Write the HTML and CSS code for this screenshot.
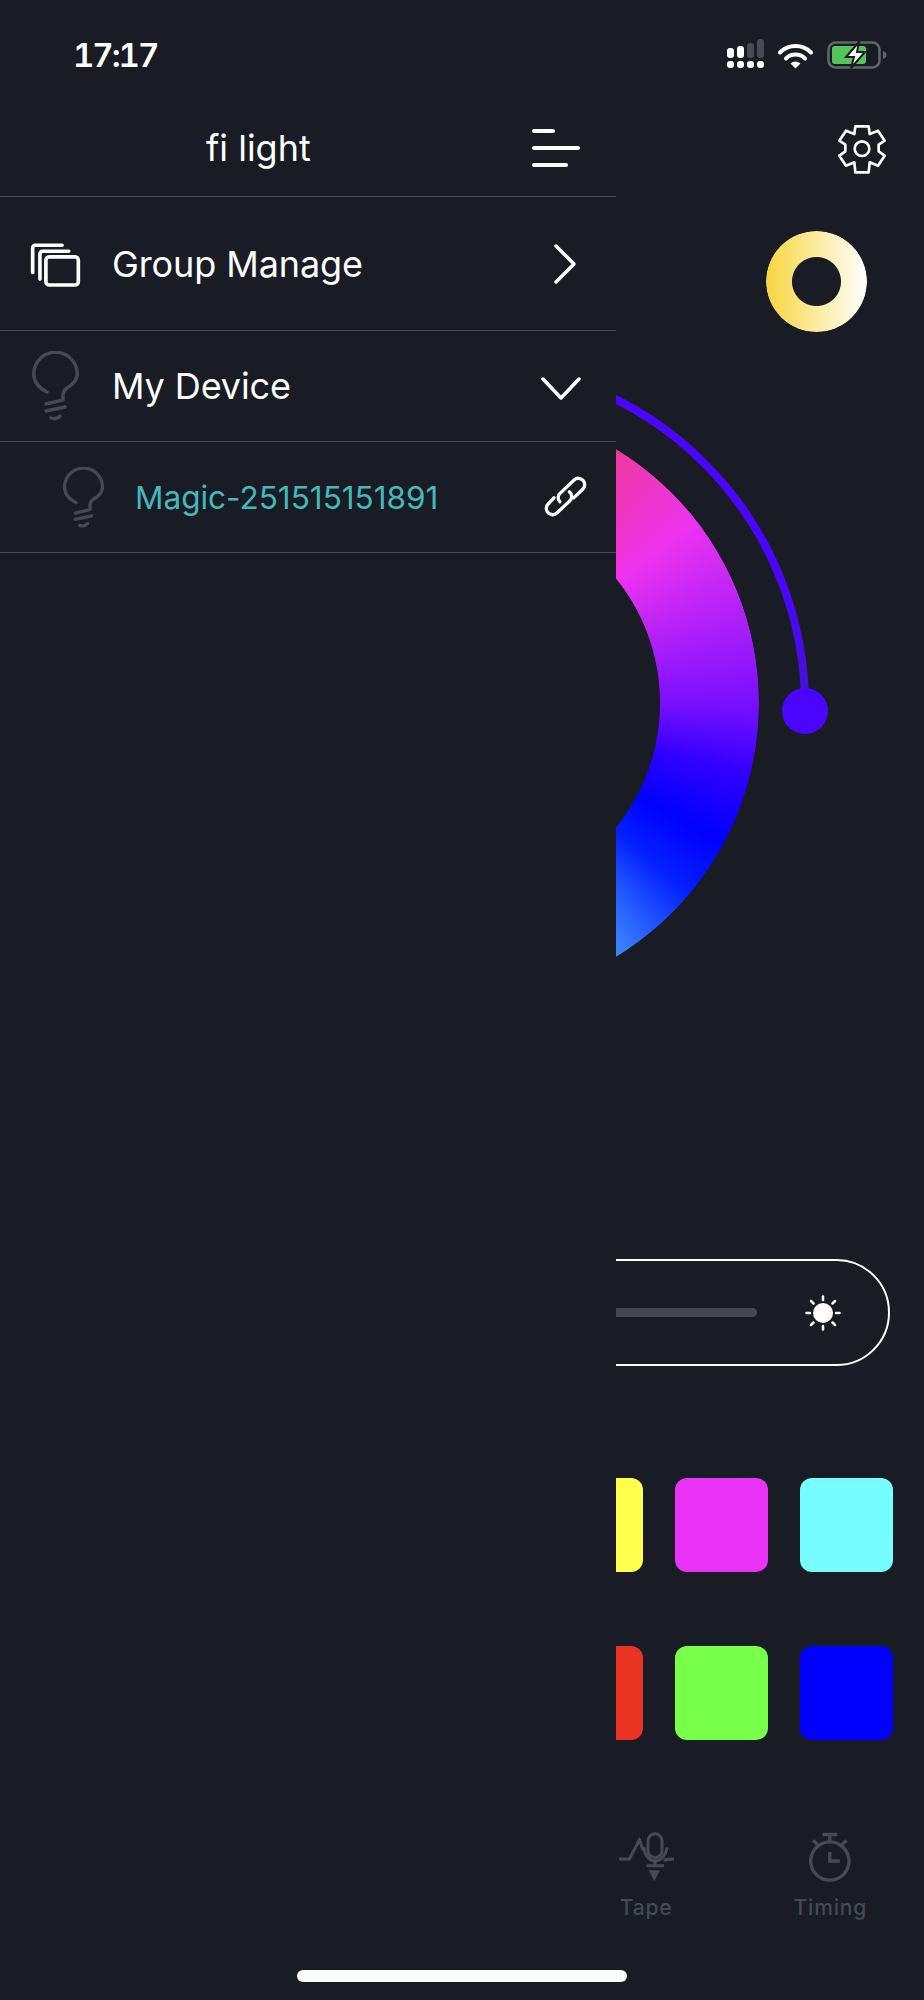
FILE: index.html
```html
<!DOCTYPE html>
<html lang="en">
  <head>
    <meta charset="UTF-8" />
    <meta name="viewport" content="width=device-width, initial-scale=1.0" />
    <title>fi light</title>
    <link rel="stylesheet" href="styles.css">
  </head>
  <body>
    <div class="screen">
      <!-- status bar sits over both the page and the drawer -->
      <div class="status-bar">
        <span class="status-time">17:17</span>
        <div class="status-icons">
          <svg class="icon-signal" width="38" height="30" viewBox="0 0 38 30">
            <rect x="0" y="9" width="7" height="10" rx="3" fill="#fff"></rect>
            <rect x="10" y="7" width="7" height="12" rx="3" fill="#fff"></rect>
            <rect x="20" y="4" width="7" height="15" rx="3" fill="#484a54"></rect>
            <rect x="30" y="0" width="7" height="19" rx="3" fill="#484a54"></rect>
            <rect x="0" y="22" width="7" height="7" rx="3" fill="#fff"></rect>
            <rect x="10" y="22" width="7" height="7" rx="3" fill="#fff"></rect>
            <rect x="20" y="22" width="7" height="7" rx="3" fill="#fff"></rect>
            <rect x="30" y="22" width="7" height="7" rx="3" fill="#fff"></rect>
          </svg>
          <svg class="icon-wifi" width="35" height="26" viewBox="0 0 35 26">
            <path d="M2 9.5a22 22 0 0 1 31 0" fill="none" stroke="#fff" stroke-width="4" stroke-linecap="round"></path>
            <path d="M8 15.5a13.5 13.5 0 0 1 19 0" fill="none" stroke="#fff" stroke-width="4" stroke-linecap="round"></path>
            <path d="M12.5 20.5a7 7 0 0 1 10 0L17.5 25.5z" fill="#fff"></path>
          </svg>
          <svg class="icon-battery" width="60" height="28" viewBox="0 0 60 28">
            <rect x="1.5" y="1.5" width="51" height="25" rx="7" fill="none" stroke="#63656c" stroke-width="2.5"></rect>
            <rect x="5" y="5" width="34" height="18" rx="3" fill="#53c65b"></rect>
            <path d="M56 10c2.500 1 3.500 2.500 3.500 4s-1 3-3.500 4z" fill="#63656c"></path>
            <path d="M32 1 19 16h8l-3 11 14-16h-8z" fill="#fff" stroke="#191c25" stroke-width="2"></path>
          </svg>
        </div>
      </div>

      <div class="main">
        <div class="main-top">
          <svg class="icon-gear" width="50" height="50" viewBox="37 25 150 150" fill="none" stroke="#fff" stroke-width="8" stroke-linejoin="round">
            <path d="M92 32H132L135 55L160 45L180 75L162 87V107L180 120L160 150L135 140L132 170H92L89 140L64 150L44 120L62 107V87L44 75L64 45L89 55Z"></path>
            <circle cx="112" cy="99" r="22"></circle>
          </svg>
          <div class="ring"></div>
        </div>

        <div class="dial">
          <div class="wheel"></div>
          <svg class="dial-arc" width="694" height="694" viewBox="0 0 694 694">
            <defs>
              <linearGradient id="arcFade" x1="0" y1="0" x2="0" y2="1">
                <stop offset="0.6" stop-color="#4a05ff"></stop>
                <stop offset="1" stop-color="#4412d2"></stop>
              </linearGradient>
            </defs>
            <path d="M347 4A343 343 0 0 1 690 347" fill="none" stroke="url(#arcFade)" stroke-width="8"></path>
            <circle cx="690" cy="352" r="23" fill="#4a05ff"></circle>
          </svg>
        </div>

        <div class="brightness">
          <div class="brightness-track"></div>
          <svg class="icon-sun" width="36" height="36" viewBox="0 0 36 36">
            <circle cx="18" cy="18" r="10" fill="#fff"></circle>
            <g stroke="#fff" stroke-width="2.500" stroke-linecap="round">
              <line x1="18" y1="1.500" x2="18" y2="5"></line>
              <line x1="18" y1="31" x2="18" y2="34.500"></line>
              <line x1="1.500" y1="18" x2="5" y2="18"></line>
              <line x1="31" y1="18" x2="34.500" y2="18"></line>
              <line x1="6" y1="6" x2="8.500" y2="8.500"></line>
              <line x1="27.500" y1="27.500" x2="30" y2="30"></line>
              <line x1="6" y1="30" x2="8.500" y2="27.500"></line>
              <line x1="27.500" y1="8.500" x2="30" y2="6"></line>
            </g>
          </svg>
        </div>

        <div class="swatches">
          <div class="swatch swatch-yellow"></div>
          <div class="swatch swatch-magenta"></div>
          <div class="swatch swatch-cyan"></div>
          <div class="swatch swatch-red"></div>
          <div class="swatch swatch-green"></div>
          <div class="swatch swatch-blue"></div>
        </div>

        <div class="tabs">
          <div class="tab tab-tape">
            <svg width="55" height="50" viewBox="57 97 165 150" fill="none" stroke="#474a55" stroke-width="9">
              <path d="M57 178H88L118 122L130 152"></path>
              <rect x="144" y="102" width="42" height="72" rx="21"></rect>
              <path d="M132 143C134 170 150 184 165 184C180 184 198 170 201 143"></path>
              <path d="M165 184V198M140 198H192"></path>
              <path d="M192 184C198 178 204 178 222 178"></path>
              <path d="M146 212H180L163 245Z" fill="#474a55" stroke="none"></path>
              <path d="M118 112L108 130H128Z" fill="#474a55" stroke="none"></path>
            </svg>
            <span>Tape</span>
          </div>
          <div class="tab tab-timing">
            <svg width="42" height="50" viewBox="630 97 125 148" fill="none" stroke="#474a55" stroke-width="10">
              <circle cx="692" cy="183" r="57"></circle>
              <path d="M670 104H714M692 104V126"></path>
              <path d="M642 122L656 134M742 122L728 134"></path>
              <path d="M692 156V183H722"></path>
            </svg>
            <span>Timing</span>
          </div>
        </div>
      </div>

      <div class="drawer">
        <div class="drawer-header">
          <h1>fi light</h1>
          <svg width="48" height="38" viewBox="0 0 48 38" stroke="#fff" stroke-width="4" stroke-linecap="round">
            <line x1="2" y1="2" x2="21" y2="2"></line>
            <line x1="2" y1="19" x2="46" y2="19"></line>
            <line x1="2" y1="36" x2="34" y2="36"></line>
          </svg>
        </div>

        <div class="drawer-row row-group">
          <svg class="row-icon" width="51" height="45" viewBox="28 40 154 134" fill="none" stroke="#fff" stroke-width="11" stroke-linecap="round">
            <path d="M36 128V54a8 8 0 0 1 8-8H125"></path>
            <path d="M58 148V72a8 8 0 0 1 8-8H145"></path>
            <rect x="76" y="81" width="98" height="85" rx="10"></rect>
          </svg>
          <span class="row-label">Group Manage</span>
          <svg class="row-end" width="22" height="40" viewBox="0 0 22 40" fill="none" stroke="#fff" stroke-width="3.500" stroke-linecap="round" stroke-linejoin="round">
            <path d="M2 2L20 20L2 38"></path>
          </svg>
        </div>

        <div class="drawer-row row-device">
          <svg class="row-icon" width="47" height="70" viewBox="0 0 47 70" fill="none" stroke="#464954" stroke-width="3.500" stroke-linecap="round" stroke-linejoin="round">
            <path d="M15 41C7 37 1.750 31 1.750 23A21.750 21.750 0 0 1 45.250 23C45.250 30 40 34 35 37C32 39 31 41 31 44V49L14 53"></path>
            <path d="M14 60L33 56"></path>
            <path d="M19 67Q24 69 28 65"></path>
          </svg>
          <span class="row-label">My Device</span>
          <svg class="row-end row-chevron" width="40" height="23" viewBox="0 0 40 23" fill="none" stroke="#fff" stroke-width="3.500" stroke-linecap="round" stroke-linejoin="round">
            <path d="M2 2L20 21L38 2"></path>
          </svg>
        </div>

        <div class="drawer-row row-magic">
          <svg class="row-icon" width="41" height="61" viewBox="0 0 47 70" fill="none" stroke="#464954" stroke-width="3.800" stroke-linecap="round" stroke-linejoin="round">
            <path d="M15 41C7 37 1.750 31 1.750 23A21.750 21.750 0 0 1 45.250 23C45.250 30 40 34 35 37C32 39 31 41 31 44V49L14 53"></path>
            <path d="M14 60L33 56"></path>
            <path d="M19 67Q24 69 28 65"></path>
          </svg>
          <span class="row-label">Magic-251515151891</span>
          <svg class="row-end" width="43" height="42" viewBox="45 35 130 125" fill="none" stroke="#fff" stroke-width="10" stroke-linecap="round" stroke-linejoin="round">
            <path d="M135 100L162 74A18 18 0 0 0 136 46L95 85A18 18 0 0 0 93 112"></path>
            <path d="M75 100L58 118A18 18 0 0 0 84 146L122 110A18 18 0 0 0 122 82"></path>
          </svg>
        </div>
      </div>

      <div class="home-indicator"></div>
    </div>
  </body>
</html>
```

FILE: styles.css
```css
* {
  box-sizing: border-box;
}

body {
  font-family: Inter, "Noto Sans", sans-serif;
  margin: 0;
  padding: 0;
  background-color: #191c25;
  color: white;
}

svg {
  display: block;
  flex-shrink: 0;
}

.screen {
  position: relative;
  width: 924px;
  height: 2000px;
  overflow: hidden;
  background-color: #191c25;
}

.status-bar {
  position: absolute;
  top: 0;
  left: 0;
  z-index: 2;
  width: 100%;
  height: 80px;
  padding: 39px 37px 0 73px;
  display: flex;
  justify-content: space-between;
}

.status-time {
  font-size: 33px;
  font-weight: 600;
  line-height: 33px;
  letter-spacing: -2px;
  font-variant-numeric: tabular-nums;
}

.status-icons {
  display: flex;
  align-items: flex-start;
  gap: 12px;
}

.icon-wifi {
  margin-top: 4px;
  margin-left: 1px;
  margin-right: 2px;
}

.icon-battery {
  margin-top: 2px;
}

/* page under the drawer */
.main {
  height: 100%;
  display: flex;
  flex-direction: column;
}

.main-top {
  padding-top: 124px;
  height: 359px;
  display: flex;
  flex-direction: column;
  align-items: flex-end;
}

.icon-gear {
  margin-right: 37px;
}

.ring {
  width: 101px;
  height: 101px;
  margin-top: 57px;
  margin-right: 57px;
  border-radius: 50%;
  background: linear-gradient(to right, #f8d63f, #ffffff);
  -webkit-mask: radial-gradient(circle, transparent 24px, black 25px);
  mask: radial-gradient(circle, transparent 24px, black 25px);
}

.dial {
  position: relative;
  width: 694px;
  height: 694px;
  margin: 0 auto;
  display: flex;
  align-items: center;
  justify-content: center;
}

.wheel {
  width: 594px;
  height: 594px;
  border-radius: 50%;
  margin-top: -6px;
  background: conic-gradient(
    #ee3a9e 0deg,
    #ee3a9e 31deg,
    #ee33f0 52deg,
    #7a10ff 90deg,
    #3000ff 104deg,
    #0000ff 118deg,
    #0420ff 130deg,
    #3f8cff 149deg,
    #3f8cff 360deg
  );
  -webkit-mask: radial-gradient(circle, transparent 197.500px, black 198.500px);
  mask: radial-gradient(circle, transparent 197.500px, black 198.500px);
}

.dial-arc {
  position: absolute;
  top: 0;
  left: 0;
  overflow: visible;
}

.brightness {
  width: 856px;
  height: 107px;
  margin: 206px 0 0 34px;
  padding-right: 47px;
  border: 2.500px solid white;
  border-radius: 54px;
  display: flex;
  align-items: center;
  justify-content: flex-end;
  gap: 48px;
}

.brightness-track {
  width: 300px;
  height: 9px;
  border-radius: 5px;
  background-color: #454852;
}

.swatches {
  display: grid;
  grid-template-columns: repeat(3, 93.500px);
  column-gap: 31.500px;
  row-gap: 74px;
  margin: 112px 31px 0 0;
  justify-content: end;
}

.swatch {
  height: 94px;
  border-radius: 12px;
}

.swatch-yellow {
  background-color: #ffff4d;
}

.swatch-magenta {
  background-color: #ea33f7;
}

.swatch-cyan {
  background-color: #75fdff;
}

.swatch-red {
  background-color: #e93323;
}

.swatch-green {
  background-color: #77ff4a;
}

.swatch-blue {
  background-color: #0000ff;
}

.tabs {
  display: flex;
  justify-content: flex-end;
  gap: 120px;
  margin-top: 92px;
  padding-right: 57px;
}

.tab {
  display: flex;
  flex-direction: column;
  align-items: center;
  gap: 14px;
  color: #474a55;
  font-size: 21px;
  font-weight: 500;
  line-height: 24px;
  letter-spacing: 0.8px;
}

/* drawer */
.drawer {
  position: absolute;
  top: 0;
  left: 0;
  z-index: 1;
  width: 616px;
  height: 100%;
  background-color: #191c25;
}

.drawer-header {
  height: 197px;
  padding: 100px 36px 0 206px;
  border-bottom: 1px solid #484a53;
  display: flex;
  align-items: center;
  justify-content: space-between;
}

.drawer-header h1 {
  margin: 0;
  font-size: 36px;
  font-weight: 400;
}

.drawer-row {
  display: flex;
  align-items: center;
  border-bottom: 1px solid #484a53;
}

.row-label {
  flex: 1;
  font-size: 36px;
  letter-spacing: -0.1px;
}

.row-group {
  height: 134px;
  padding: 0 40px 0 30px;
}

.row-group .row-icon {
  margin-top: 3px;
}

.row-group .row-label {
  margin-left: 31px;
}

.row-device {
  height: 111px;
  padding: 0 35px 0 32px;
}

.row-device .row-label {
  margin-left: 33px;
}

.row-chevron {
  margin-top: 4px;
}

.row-magic {
  height: 111px;
  padding: 0 29px 0 63px;
}

.row-magic .row-label {
  margin-left: 31px;
  font-size: 31.500px;
  letter-spacing: 0;
  color: #45b8bb;
}

.home-indicator {
  position: absolute;
  left: 297px;
  top: 1970px;
  z-index: 2;
  width: 330px;
  height: 12px;
  border-radius: 6px;
  background-color: white;
}
```
